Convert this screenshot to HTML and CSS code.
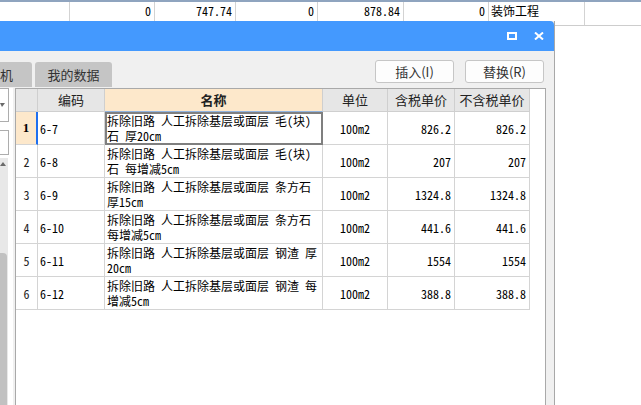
FILE: index.html
```html
<!DOCTYPE html>
<html lang="zh-CN">
<head>
<meta charset="utf-8">
<title>定额查询</title>
<link rel="stylesheet" href="styles.css">
</head>
<body>
<div class="sheet">
  <div class="sheet-row">
    <div class="sc c1"></div>
    <div class="sc c2 num">0</div>
    <div class="sc c3 num">747.74</div>
    <div class="sc c4 num">0</div>
    <div class="sc c5 num">878.84</div>
    <div class="sc c6 num">0</div>
    <div class="sc c7 txt">装饰工程</div>
    <div class="sc last"></div>
  </div>
</div>

<div class="dialog">
  <div class="titlebar">
    <svg class="tb-icon" width="10" height="8" viewBox="0 0 10 8"><rect x="1" y="1" width="8" height="6" fill="none" stroke="#fff" stroke-width="2"/></svg>
    <svg class="tb-icon" width="10" height="8" viewBox="0 0 10 8"><path d="M1 0.5L9 7.5M9 0.5L1 7.5" stroke="#fff" stroke-width="2" fill="none"/></svg>
  </div>
  <div class="dbody">
    <div class="toolbar">
      <div class="tabs">
        <div class="tab tab-cut">机</div>
        <div class="tab tab-main">我的数据</div>
      </div>
      <div class="actions">
        <button class="btn">插入(I)</button>
        <button class="btn">替换(R)</button>
      </div>
    </div>
    <div class="main">
      <div class="side">
        <div class="combo"><span class="arrow-down"></span></div>
        <div class="field"></div>
        <div class="scroll">
          <span class="arrow-up"></span>
          <div class="thumb"></div>
        </div>
      </div>
      <div class="panel">
        <div class="grid">
          <div class="h corner"></div>
          <div class="h">编码</div>
          <div class="h h-sel">名称</div>
          <div class="h">单位</div>
          <div class="h">含税单价</div>
          <div class="h">不含税单价</div>

          <div class="rn rn-sel">1</div>
          <div class="code code-sel">6-7</div>
          <div class="name name-sel">拆除旧路 人工拆除基层或面层 毛(块)<br>石 厚20cm</div>
          <div class="unit">100m2</div>
          <div class="price">826.2</div>
          <div class="price">826.2</div>

          <div class="rn">2</div>
          <div class="code">6-8</div>
          <div class="name">拆除旧路 人工拆除基层或面层 毛(块)<br>石 每增减5cm</div>
          <div class="unit">100m2</div>
          <div class="price">207</div>
          <div class="price">207</div>

          <div class="rn">3</div>
          <div class="code">6-9</div>
          <div class="name">拆除旧路 人工拆除基层或面层 条方石<br>厚15cm</div>
          <div class="unit">100m2</div>
          <div class="price">1324.8</div>
          <div class="price">1324.8</div>

          <div class="rn">4</div>
          <div class="code">6-10</div>
          <div class="name">拆除旧路 人工拆除基层或面层 条方石<br>每增减5cm</div>
          <div class="unit">100m2</div>
          <div class="price">441.6</div>
          <div class="price">441.6</div>

          <div class="rn">5</div>
          <div class="code">6-11</div>
          <div class="name">拆除旧路 人工拆除基层或面层 钢渣 厚<br>20cm</div>
          <div class="unit">100m2</div>
          <div class="price">1554</div>
          <div class="price">1554</div>

          <div class="rn">6</div>
          <div class="code">6-12</div>
          <div class="name">拆除旧路 人工拆除基层或面层 钢渣 每<br>增减5cm</div>
          <div class="unit">100m2</div>
          <div class="price">388.8</div>
          <div class="price">388.8</div>
        </div>
      </div>
    </div>
  </div>
</div>
</body>
</html>
```

FILE: styles.css
```css
* { box-sizing: border-box; }
html, body { margin: 0; padding: 0; }
body {
  width: 641px;
  height: 405px;
  overflow: hidden;
  position: relative;
  background: #fff;
  color: #000;
  font-family: "Noto Sans CJK SC", "Noto Sans", sans-serif;
}

/* underlying spreadsheet */
.sheet { border-top: 2px solid #8fa4bf; }
.sheet-row {
  display: flex;
  height: 24px;
  border-bottom: 1px solid #cdcdcd;
}
.sc {
  border-right: 1px solid #d3d3d3;
  padding: 1px 3px 0 3px;
  line-height: 16px;
  font-family: "Noto Sans Mono CJK SC", "Noto Sans CJK SC", monospace;
  font-size: 12px;
}
.sc.num { text-align: right; }
.sc.txt { font-family: "Noto Sans CJK SC", sans-serif; font-size: 12px; padding-left: 2px; }
.c1 { width: 70px; }
.c2 { width: 85px; }
.c3 { width: 81px; }
.c4 { width: 82px; }
.c5 { width: 86px; }
.c6 { width: 85px; }
.c7 { width: 96px; }
.sc.last { flex: 1; border-right: none; }

/* dialog window */
.dialog {
  position: absolute;
  left: 0;
  top: 21px;
  width: 555px;
  height: 400px;
  display: flex;
  flex-direction: column;
  background: #f0f0f0;
  border-right: 1px solid #a8a8a8;
}
.titlebar {
  height: 30px;
  flex: none;
  background: #4499fe;
  border-top-right-radius: 4px;
  display: flex;
  justify-content: flex-end;
  align-items: center;
  gap: 17px;
  padding-right: 10px;
}
.tb-icon { display: block; }

.dbody { flex: 1; display: flex; flex-direction: column; min-height: 0; }

.toolbar {
  height: 37px;
  flex: none;
  display: flex;
  justify-content: space-between;
}
.tabs { display: flex; align-items: flex-end; gap: 3px; padding-bottom: 1px; }
.tab {
  height: 25px;
  background: #c5c5c5;
  border-radius: 3px 3px 0 0;
  font-size: 13px;
  line-height: 25px;
  color: #333;
}
.tab-cut { width: 32px; border-top-left-radius: 0; padding-left: 0; }
.tab-main { width: 77px; text-align: center; }

.actions { display: flex; gap: 11px; padding: 9px 10px 0 0; }
.btn {
  width: 79px;
  height: 23px;
  padding: 0;
  border: 1px solid #c6c6c6;
  border-radius: 3px;
  background: #fdfdfd;
  font-family: "Noto Sans CJK SC", sans-serif;
  font-size: 13px;
  line-height: 20px;
  color: #333;
}

.main { flex: 1; display: flex; min-height: 0; }

/* left narrow panel (mostly off-screen) */
.side {
  width: 13px;
  flex: none;
  background: #fff;
  display: flex;
  flex-direction: column;
}
.combo {
  width: 9px;
  height: 34px;
  border: 1px solid #adadad;
  border-left: none;
  display: flex;
  align-items: center;
}
.arrow-down {
  width: 0;
  height: 0;
  border-top: 4px solid #6a6a6a;
  border-left: 2px solid transparent;
  border-right: 3px solid transparent;
}
.field {
  width: 9px;
  height: 25px;
  margin-top: 8px;
  border: 1px solid #adadad;
  border-left: none;
}
.scroll {
  width: 8px;
  flex: 1;
  margin-top: 3px;
  background: #e8e8e8;
  display: flex;
  flex-direction: column;
}
.arrow-up {
  width: 0;
  height: 0;
  margin: 4px 0 0 0;
  border-bottom: 4px solid #6a6a6a;
  border-left: 3px solid transparent;
  border-right: 3px solid transparent;
}
.thumb {
  flex: 1;
  width: 7px;
  margin-top: 87px;
  background: #c1c1c1;
  border-top-right-radius: 4px;
}

/* table panel */
.panel {
  width: 531px;
  flex: none;
  margin-left: 2px;
  border: 1px solid #a9a9a9;
  background: #fff;
}
.grid {
  display: grid;
  grid-template-columns: 22px 67px 218px 65px 67px 75px;
  grid-template-rows: 23px;
  grid-auto-rows: 33px;
}
.grid > div {
  border-right: 1px solid #d4d4d4;
  border-bottom: 1px solid #d4d4d4;
}
.h {
  background: #e6e6e6;
  font-size: 13px;
  line-height: 22px;
  text-align: center;
  color: #222;
  border-color: #cfcfcf !important;
}
.grid > .h-sel {
  background: #fde8cb;
  font-weight: bold;
  border-bottom-color: #8fb3e0 !important;
}
.rn, .code, .unit, .price, .name {
  font-family: "Noto Sans Mono CJK SC", "Noto Sans CJK SC", monospace;
  font-size: 12px;
}
.rn {
  display: flex;
  align-items: center;
  justify-content: center;
  color: #222;
}
.grid > .rn-sel {
  background: #fde8cb;
  font-weight: bold;
  font-family: "Liberation Serif", serif;
  font-size: 13px;
  color: #000;
  border-right: 2px solid #1f6fef;
}
.code { display: flex; align-items: center; padding-left: 2px; }
.name {
  padding: 1px 0 0 2px;
  line-height: 15px;
  white-space: nowrap;
  overflow: hidden;
}
.name-sel { outline: 2px solid #7f7f7f; outline-offset: -2px; }
.unit { display: flex; align-items: center; justify-content: center; }
.price { display: flex; align-items: center; justify-content: flex-end; padding-right: 3px; }
```
